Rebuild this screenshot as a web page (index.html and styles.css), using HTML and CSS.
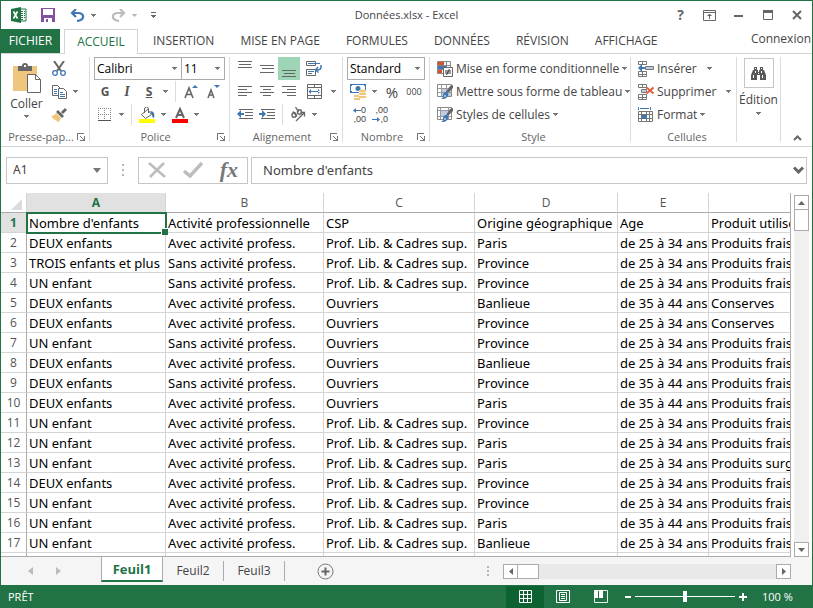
FILE: index.html
```html
<!DOCTYPE html>
<html lang="fr">
<head>
<meta charset="utf-8">
<meta name="viewport" content="width=device-width, initial-scale=1">
<title>Données.xlsx - Excel</title>
<link rel="stylesheet" href="styles.css">
</head>
<body>
<svg class="sprite" aria-hidden="true">
  <symbol id="caret" viewBox="0 0 5 3"><path d="M0 0h5v1H4v1H3v1H2V2H1V1H0z"/></symbol>
  <symbol id="launcher" viewBox="0 0 8 8"><path d="M0 0h7v1H1v6H0zM3 3h1v1h1v1h1v1h1V3h1v5H3V7h3V6H5V5H4V4H3z"/></symbol>
  <symbol id="brush" viewBox="0 0 17 16"><path d="M16 1v3l-5 5-2-1 4-6z" fill="#666"/><path d="M9 8c3 1 3 3 1 5-1 2-4 2-6 2 2-1 2-2 2-4 0-1 1-3 3-3z" fill="#3f77b3"/><path d="M8 11l1 1-1 1-1-1z" fill="#fff"/></symbol>
</svg>
<div class="window">
  <header class="titlebar">
    <div class="quick">
      <svg class="logo" width="16" height="16" viewBox="0 0 16 16"><path d="M9 2h6v12H9z" fill="#fff" stroke="#217346"/><path d="M10 4h2v1h-2zM13 4h1v1h-1zM10 6h2v1h-2zM13 6h1v1h-1zM10 8h2v1h-2zM13 8h1v1h-1zM10 10h2v1h-2zM13 10h1v1h-1zM10 12h2v1h-2z" fill="#217346"/><path d="M0 2l10-2v16L0 14z" fill="#217346"/><path d="M2.500 4.500l4 7M6.500 4.500l-4 7" stroke="#fff" stroke-width="1.600"/></svg>
      <button class="q save" aria-label="Enregistrer"><svg width="14" height="14" viewBox="0 0 14 14"><path d="M0 0h14v14H0z" fill="#8350a0"/><path d="M2 1h10v6H2zM3 10h8v4H7v-3H5v3H3z" fill="#fff"/></svg></button>
      <button class="q undo" aria-label="Annuler"><svg width="15" height="13" viewBox="0 0 15 13"><path d="M2 4h6c7 0 7 7-1 8M6 0L2 4l4 4" fill="none" stroke="#3f77b3" stroke-width="2.200"/></svg><svg class="caret"><use href="#caret"/></svg></button>
      <button class="q redo" aria-label="Rétablir"><svg width="15" height="13" viewBox="0 0 15 13"><path d="M13 4H7c-7 0-7 7 1 8M9 0l4 4-4 4" fill="none" stroke="#bcbcbc" stroke-width="2.200"/></svg><svg class="caret pale"><use href="#caret"/></svg></button>
      <button class="q" aria-label="Personnaliser"><svg width="5" height="6" viewBox="0 0 5 6" fill="#666"><path d="M0 0h5v1H0zM0 3h5v1H4v1H3v1H2V5H1V4H0z"/></svg></button>
    </div>
    <h1>Données.xlsx - Excel</h1>
    <div class="winbtns">
      <button aria-label="Aide"><b>?</b></button>
      <button aria-label="Options du ruban"><svg width="13" height="11" viewBox="0 0 13 11"><path d="M.5.5h12v10H.5zM0 2.500h13" fill="none" stroke="#666"/><path d="M6 9V6H4.500v-1h1V4h2v1h1v1H7v3z" fill="#666"/></svg></button>
      <button aria-label="Réduire"><svg width="9" height="3" viewBox="0 0 9 3"><path d="M0 1h9v2H0z" fill="#666"/></svg></button>
      <button aria-label="Agrandir"><svg width="10" height="10" viewBox="0 0 10 10"><path d="M.5.5h9v9h-9z" fill="none" stroke="#666"/><path d="M0 0h10v3H0z" fill="#666"/></svg></button>
      <button aria-label="Fermer"><svg width="10" height="10" viewBox="0 0 10 10"><path d="M1 1l8 8M9 1L1 9" stroke="#666" stroke-width="2"/></svg></button>
    </div>
  </header>

  <nav class="tabs">
    <a class="file" href="#fichier">FICHIER</a>
    <a class="on" href="#accueil">ACCUEIL</a>
    <a href="#insertion">INSERTION</a>
    <a href="#mise-en-page">MISE EN PAGE</a>
    <a href="#formules">FORMULES</a>
    <a href="#donnees">DONNÉES</a>
    <a href="#revision">RÉVISION</a>
    <a href="#affichage">AFFICHAGE</a>
    <a class="login" href="#connexion">Connexion</a>
  </nav>

  <div class="ribbon">
    <section class="group clip">
      <div class="cols">
        <button class="big"><svg width="28" height="31" viewBox="0 0 28 31"><path d="M0 4h24v25H0z" fill="#efc67d"/><path d="M5 9V4h4a3 3 0 0 1 6 0h4v5z" fill="#666"/><path d="M11 3h2v2h-2z" fill="#fff"/><path d="M14.500 12.500h8l5 5v13h-13z" fill="#fff" stroke="#666"/><path d="M22.500 12.500v5h5" fill="none" stroke="#666"/></svg><span>Coller</span><svg class="caret"><use href="#caret"/></svg></button>
        <div class="rows">
          <div class="row"><button aria-label="Couper"><svg width="14" height="15" viewBox="0 0 14 15"><path d="M2 0l7 10M12 0L5 10" stroke="#666" stroke-width="2"/><circle cx="3" cy="12" r="2.300" fill="none" stroke="#3f77b3" stroke-width="1.300"/><circle cx="11" cy="12" r="2.300" fill="none" stroke="#3f77b3" stroke-width="1.300"/></svg></button></div>
          <div class="row"><button aria-label="Copier"><svg width="15" height="14" viewBox="0 0 15 14"><g fill="#fff" stroke="#666"><path d="M.5.5h5l3 3v7h-8z"/><path d="M6.500 3.500h5l3 3v7h-8z"/></g><path d="M2 4h3v1H2zM2 6h3v1H2zM2 8h3v1H2zM8 7h3v1H8zM8 9h5v1H8zM8 11h5v1H8z" fill="#3f77b3"/></svg></button><button class="dd" aria-label="Options de copie"><svg class="caret"><use href="#caret"/></svg></button></div>
          <div class="row"><button aria-label="Reproduire la mise en forme"><svg width="16" height="14" viewBox="0 0 16 14"><path d="M14 0l2 2-4 4-2-2z" fill="#666"/><path d="M7 2l6 6-2 2-6-6z" fill="#666"/><path d="M5 5l5 5-2 4C5 13 2 11 0 8c2 0 4-1 5-3z" fill="#efc67d"/></svg></button></div>
        </div>
      </div>
      <div class="cap"><span>Presse-pap...</span><button class="launch" aria-label="Presse-papiers"><svg width="8" height="8"><use href="#launcher"/></svg></button></div>
    </section>

    <section class="group police">
      <div class="rows">
        <div class="row fields"><label class="pick font"><select aria-label="Police"><option>Calibri</option></select><svg class="caret"><use href="#caret"/></svg></label><label class="pick size"><select aria-label="Taille"><option>11</option></select><svg class="caret"><use href="#caret"/></svg></label></div>
        <div class="row"><button class="ltr"><b>G</b></button><button class="ltr"><i>I</i></button><button class="ltr"><u>S</u></button><button class="dd" aria-label="Soulignement"><svg class="caret"><use href="#caret"/></svg></button><span class="sep"></span><button aria-label="Agrandir la police"><svg width="14" height="15" viewBox="0 0 14 15"><path d="M1 14L5 4l4 10M2.500 10.500h5" fill="none" stroke="#666" stroke-width="1.600"/><path d="M11 1l3 3H8z" fill="#3f77b3"/></svg></button><button aria-label="Réduire la police"><svg width="14" height="15" viewBox="0 0 14 15"><path d="M2 14l3-8 3 8M3 11h4" fill="none" stroke="#666" stroke-width="1.500"/><path d="M8 1h6l-3 3z" fill="#3f77b3"/></svg></button></div>
        <div class="row"><button aria-label="Bordures"><svg width="14" height="14" viewBox="0 0 14 14"><path d="M.5 0v13M6.500 0v13M12.500 0v13M0 .5h13M0 6.500h13" stroke="#888" stroke-dasharray="1 1" fill="none"/><path d="M0 12h13v1H0z" fill="#555"/></svg></button><button class="dd" aria-label="Choix des bordures"><svg class="caret"><use href="#caret"/></svg></button><span class="sep"></span><button aria-label="Remplissage"><svg width="16" height="16" viewBox="0 0 16 16"><path d="M2.500 7.500l6-5 4 5-6 4z" fill="#fff" stroke="#666"/><path d="M5.500 6V2a2 2 0 0 1 4 0v4" fill="none" stroke="#666"/><path d="M11 4c4 0 5 3 4 7-1 0-2-1-2-3z" fill="#3f77b3"/><path d="M0 12h16v4H0z" fill="#ff0"/></svg></button><button class="dd" aria-label="Couleurs de remplissage"><svg class="caret"><use href="#caret"/></svg></button><button aria-label="Couleur de police"><svg width="16" height="16" viewBox="0 0 16 16"><path d="M4 11L8 2l4 9M5.500 8h5" fill="none" stroke="#666" stroke-width="2"/><path d="M0 12h16v4H0z" fill="red"/></svg></button><button class="dd" aria-label="Couleurs de police"><svg class="caret"><use href="#caret"/></svg></button></div>
      </div>
      <div class="cap"><span>Police</span><button class="launch" aria-label="Options de police"><svg width="8" height="8"><use href="#launcher"/></svg></button></div>
    </section>

    <section class="group align">
      <div class="rows">
        <div class="row"><button aria-label="Haut"><svg width="14" height="16" viewBox="0 0 14 16" fill="#666"><path d="M0 0h14v1H0zM1 3h12v1H1zM0 6h14v1H0z"/></svg></button><button aria-label="Centre vertical"><svg width="14" height="16" viewBox="0 0 14 16" fill="#666"><path d="M0 4h14v1H0zM2 7h12v1H2zM0 11h14v1H0z"/></svg></button><button class="pressed" aria-label="Bas"><svg width="14" height="16" viewBox="0 0 14 16" fill="#666"><path d="M0 9h14v1H0zM2 12h11v1H2zM0 15h14v1H0z"/></svg></button><button class="wide" aria-label="Renvoyer à la ligne"><svg width="16" height="16" viewBox="0 0 16 16"><path d="M.5.5h9v4h-9zM.5 8.500h9v6h-9z" fill="none" stroke="#666"/><path d="M2 2h12v1H2zM2 10h6v1H2zM2 12h4v1H2z" fill="#3f77b3"/><path d="M15 4v2c0 2-2 3-4 3M12 6L9.500 9l3 2.500" fill="none" stroke="#3f77b3" stroke-width="1.500"/></svg></button></div>
        <div class="row"><button aria-label="Gauche"><svg width="14" height="11" viewBox="0 0 14 11" fill="#666"><path d="M0 0h14v1H0zM0 3h9v1H0zM0 6h14v1H0zM0 9h9v1H0z"/></svg></button><button aria-label="Centrer"><svg width="14" height="11" viewBox="0 0 14 11" fill="#666"><path d="M0 0h14v1H0zM3 3h8v1H3zM0 6h14v1H0zM3 9h8v1H3z"/></svg></button><button aria-label="Droite"><svg width="14" height="11" viewBox="0 0 14 11" fill="#666"><path d="M0 0h14v1H0zM5 3h9v1H5zM0 6h14v1H0zM5 9h9v1H5z"/></svg></button><button class="wide" aria-label="Fusionner"><svg width="15" height="15" viewBox="0 0 15 15"><path d="M.5.5h14v14H.5zM.5 3.500h14M.5 11.500h14M7.500.5v3M7.500 11.500v3" fill="none" stroke="#666"/><path d="M2 7h11v1H2zM4 5v5L1.500 7.500zM11 5v5l2.500-2.500z" fill="#3f77b3"/></svg></button><button class="dd" aria-label="Options de fusion"><svg class="caret"><use href="#caret"/></svg></button></div>
        <div class="row"><button aria-label="Diminuer le retrait"><svg width="16" height="11" viewBox="0 0 16 11"><path d="M2 0h14v1H2zM8 3h8v1H8zM8 6h8v1H8zM2 9h14v1H2z" fill="#666"/><path d="M0 5l4-4v3h3v2H4v3z" fill="#3f77b3"/></svg></button><button aria-label="Augmenter le retrait"><svg width="16" height="11" viewBox="0 0 16 11"><path d="M2 0h14v1H2zM8 3h8v1H8zM8 6h8v1H8zM2 9h14v1H2z" fill="#666"/><path d="M7 5L3 1v3H0v2h3v3z" fill="#3f77b3"/></svg></button><span class="sep"></span><button aria-label="Orientation"><svg width="17" height="15" viewBox="0 0 17 15"><g fill="none" stroke="#666" stroke-width="1.400"><ellipse cx="4" cy="8" rx="2" ry="2.200"/><path d="M3 4.500l4 5"/><ellipse cx="9.500" cy="5" rx="2" ry="2.200"/><path d="M5.500 0l3 5"/></g><path d="M6 14l8-8M10.500 5.500h4v4" fill="none" stroke="#666" stroke-width="1.300"/></svg></button><button class="dd" aria-label="Choix d'orientation"><svg class="caret"><use href="#caret"/></svg></button></div>
      </div>
      <div class="cap"><span>Alignement</span><button class="launch" aria-label="Options d'alignement"><svg width="8" height="8"><use href="#launcher"/></svg></button></div>
    </section>

    <section class="group nombre">
      <div class="rows">
        <div class="row fields"><label class="pick format"><select aria-label="Format de nombre"><option>Standard</option></select><svg class="caret"><use href="#caret"/></svg></label></div>
        <div class="row"><button aria-label="Format comptable"><svg width="17" height="16" viewBox="0 0 17 16"><path d="M0 0h16v9H0z" fill="#3f77b3"/><path d="M2 1h12v1h1v5h-1v1H2V7H1V2h1z" fill="#fff"/><circle cx="8" cy="4.500" r="2.500" fill="#3f77b3"/><path d="M9 6h7v9H9zM3 11h6v5H3z" fill="#fff"/><g fill="#efc67d"><ellipse cx="12.500" cy="7" rx="3.500" ry="1.500"/><path d="M9 9h7v2H9zM9 12h7v2H9zM4 11h5v2H4zM4 14h6v2H4z"/></g></svg></button><button class="dd" aria-label="Choix de devise"><svg class="caret"><use href="#caret"/></svg></button><button class="pct">%</button><button class="mil">000</button></div>
        <div class="row"><button class="dec" aria-label="Ajouter une décimale"><span><svg width="8" height="5" viewBox="0 0 8 5"><path d="M0 2.500L3 0v2h5v1H3v2z" fill="#3f77b3"/></svg>0</span><span>,00</span></button><button class="dec" aria-label="Réduire les décimales"><span>,00</span><span><svg width="8" height="5" viewBox="0 0 8 5"><path d="M8 2.500L5 0v2H0v1h5v2z" fill="#3f77b3"/></svg>,0</span></button></div>
      </div>
      <div class="cap"><span>Nombre</span><button class="launch" aria-label="Options de nombre"><svg width="8" height="8"><use href="#launcher"/></svg></button></div>
    </section>

    <section class="group style">
      <div class="rows">
        <div class="row"><button class="cmd"><svg width="16" height="16" viewBox="0 0 16 16"><path d="M.5.5h13v12H.5zM.5 4.500h13M.5 8.500h13M9.500.5v12" fill="#fff" stroke="#888"/><path d="M1 1h6v3H1zM1 9h4v3H1z" fill="#d9502b"/><path d="M1 5h8v3H1z" fill="#3f77b3"/><path d="M6.500 6.500h9v9h-9z" fill="#fff" stroke="#666"/><path d="M8 10h6M8 12h6M12.500 8l-3 6" stroke="#333"/></svg>Mise en forme conditionnelle<svg class="caret"><use href="#caret"/></svg></button></div>
        <div class="row"><button class="cmd"><svg width="16" height="16" viewBox="0 0 16 16"><path d="M.5.5h14v12H.5z" fill="#fff" stroke="#888"/><path d="M5 5h9v7H5z" fill="#bccde4"/><path d="M.5 4.500h14M.5 8.500h14M4.500.5v12M9.500.5v12" stroke="#999"/><use href="#brush" width="17" height="16"/></svg>Mettre sous forme de tableau<svg class="caret"><use href="#caret"/></svg></button></div>
        <div class="row"><button class="cmd"><svg width="16" height="16" viewBox="0 0 16 16"><path d="M.5.5h14v12H.5z" fill="#fff" stroke="#888"/><path d="M3 3h9v7H3z" fill="#bccde4"/><path d="M.5 3.500h14M.5 9.500h14M3.500.5v12M11.500.5v12" stroke="#999"/><use href="#brush" width="17" height="16"/></svg>Styles de cellules<svg class="caret"><use href="#caret"/></svg></button></div>
      </div>
      <div class="cap"><span>Style</span></div>
    </section>

    <section class="group cells">
      <div class="rows">
        <div class="row"><button class="cmd gap"><svg width="16" height="16" viewBox="0 0 16 16"><path d="M.5.5h8v3h-8zM4.500.5v3M.5 10.500h8v5h-8zM4.500 10.500v5M.5 13.500h8" fill="#fff" stroke="#777"/><path d="M7.500 5.500h8v3h-8z" fill="#bccde4" stroke="#777"/><path d="M0 7l4-4v3h3v2H4v3z" fill="#3f77b3"/></svg>Insérer<svg class="caret"><use href="#caret"/></svg></button></div>
        <div class="row"><button class="cmd gap"><svg width="16" height="16" viewBox="0 0 16 16"><path d="M.5.5h8v3h-8zM4.500.5v3M.5 10.500h8v5h-8zM4.500 10.500v5M.5 13.500h8" fill="#fff" stroke="#777"/><path d="M3.500 5.500h5v3h-5z" fill="#bccde4" stroke="#777"/><path d="M8.500 3.500l7 6M15.500 3.500l-7 6" stroke="#e0603c" stroke-width="2"/></svg>Supprimer<svg class="caret"><use href="#caret"/></svg></button></div>
        <div class="row"><button class="cmd"><svg width="16" height="16" viewBox="0 0 16 16"><path d="M0 0h1v3H0zM12 0h1v3h-1zM2 1h9v1H2z" fill="#3f77b3"/><path d="M.5 4.500h14v10H.5zM.5 7.500h14M.5 11.500h14M3.500 4.500v10M8.500 4.500v10M11.500 4.500v10" fill="#fff" stroke="#777"/><path d="M4 8h5v4H4z" fill="#3f77b3"/></svg>Format<svg class="caret"><use href="#caret"/></svg></button></div>
      </div>
      <div class="cap"><span>Cellules</span></div>
    </section>

    <section class="group edit">
      <button class="big"><span class="box"><svg width="15" height="13" viewBox="0 0 15 13" fill="#595959"><path d="M3 0h3v3h1v2h1V3h1V0h3v3h1l2 5v5H9V8H6v5H0V8l2-5h1z"/><path d="M4 1h1v1H4zM10 1h1v1h-1zM2 8h1v3H2zM11 8h1v3h-1zM7 6h1v1H7zM4 4h1v2H4zM10 4h1v2h-1z" fill="#fff"/></svg></span><span>Édition</span><svg class="caret"><use href="#caret"/></svg></button>
    </section>
    <button class="collapse" aria-label="Réduire le ruban"><svg width="9" height="6" viewBox="0 0 9 6"><path d="M1 5l3.500-3.500L8 5" fill="none" stroke="#666" stroke-width="2"/></svg></button>
  </div>

  <div class="formula">
    <label class="name"><input value="A1" aria-label="Zone Nom"><svg class="tri" width="8" height="5" viewBox="0 0 8 5"><path d="M0 0h8L4 5z" fill="#777"/></svg></label>
    <svg class="dots" width="2" height="12" viewBox="0 0 2 12"><path d="M0 0h2v2H0zM0 5h2v2H0zM0 10h2v2H0z" fill="#b5b5b5"/></svg>
    <div class="fbtns"><button aria-label="Annuler la saisie"><svg width="18" height="16" viewBox="0 0 18 16"><path d="M1 1l16 14M16 1L2 15" stroke="#bdbdbd" stroke-width="2.600"/></svg></button><button aria-label="Valider"><svg width="20" height="16" viewBox="0 0 20 16"><path d="M1 9l6 5L19 1" fill="none" stroke="#bdbdbd" stroke-width="3.500"/></svg></button><button class="fx">fx</button></div>
    <label class="bar"><input value="Nombre d'enfants" aria-label="Barre de formule"><svg width="11" height="8" viewBox="0 0 11 8"><path d="M1 1.500l4.500 4.500L10 1.500" fill="none" stroke="#666" stroke-width="3"/></svg></label>
  </div>

  <main class="sheet">
    <div class="grid">
      <table>
        <colgroup><col class="cn"><col class="ca"><col class="cb"><col class="cc"><col class="cd"><col class="ce"><col></colgroup>
        <thead><tr><th class="corner"><svg width="11" height="11" viewBox="0 0 11 11"><path d="M11 0v11H0z" fill="#dcdcdc"/></svg></th><th class="sel">A</th><th>B</th><th>C</th><th>D</th><th>E</th><th></th></tr></thead>
        <tbody>
          <tr><th class="sel">1</th><td class="active">Nombre d'enfants</td><td>Activité professionnelle</td><td>CSP</td><td>Origine géographique</td><td>Age</td><td>Produit utilisé</td></tr>
          <tr><th>2</th><td>DEUX enfants</td><td>Avec activité profess.</td><td>Prof. Lib. &amp; Cadres sup.</td><td>Paris</td><td>de 25 à 34 ans</td><td>Produits frais</td></tr>
          <tr><th>3</th><td>TROIS enfants et plus</td><td>Sans activité profess.</td><td>Prof. Lib. &amp; Cadres sup.</td><td>Province</td><td>de 25 à 34 ans</td><td>Produits frais</td></tr>
          <tr><th>4</th><td>UN enfant</td><td>Sans activité profess.</td><td>Prof. Lib. &amp; Cadres sup.</td><td>Province</td><td>de 25 à 34 ans</td><td>Produits frais</td></tr>
          <tr><th>5</th><td>DEUX enfants</td><td>Avec activité profess.</td><td>Ouvriers</td><td>Banlieue</td><td>de 35 à 44 ans</td><td>Conserves</td></tr>
          <tr><th>6</th><td>DEUX enfants</td><td>Avec activité profess.</td><td>Ouvriers</td><td>Province</td><td>de 25 à 34 ans</td><td>Conserves</td></tr>
          <tr><th>7</th><td>UN enfant</td><td>Sans activité profess.</td><td>Ouvriers</td><td>Province</td><td>de 25 à 34 ans</td><td>Produits frais</td></tr>
          <tr><th>8</th><td>DEUX enfants</td><td>Avec activité profess.</td><td>Ouvriers</td><td>Banlieue</td><td>de 25 à 34 ans</td><td>Produits frais</td></tr>
          <tr><th>9</th><td>DEUX enfants</td><td>Sans activité profess.</td><td>Ouvriers</td><td>Province</td><td>de 35 à 44 ans</td><td>Produits frais</td></tr>
          <tr><th>10</th><td>DEUX enfants</td><td>Avec activité profess.</td><td>Ouvriers</td><td>Paris</td><td>de 35 à 44 ans</td><td>Produits frais</td></tr>
          <tr><th>11</th><td>UN enfant</td><td>Avec activité profess.</td><td>Prof. Lib. &amp; Cadres sup.</td><td>Province</td><td>de 25 à 34 ans</td><td>Produits frais</td></tr>
          <tr><th>12</th><td>UN enfant</td><td>Avec activité profess.</td><td>Prof. Lib. &amp; Cadres sup.</td><td>Paris</td><td>de 25 à 34 ans</td><td>Produits frais</td></tr>
          <tr><th>13</th><td>UN enfant</td><td>Avec activité profess.</td><td>Prof. Lib. &amp; Cadres sup.</td><td>Paris</td><td>de 25 à 34 ans</td><td>Produits surgelés</td></tr>
          <tr><th>14</th><td>DEUX enfants</td><td>Avec activité profess.</td><td>Prof. Lib. &amp; Cadres sup.</td><td>Province</td><td>de 25 à 34 ans</td><td>Produits frais</td></tr>
          <tr><th>15</th><td>UN enfant</td><td>Avec activité profess.</td><td>Prof. Lib. &amp; Cadres sup.</td><td>Province</td><td>de 25 à 34 ans</td><td>Produits frais</td></tr>
          <tr><th>16</th><td>UN enfant</td><td>Avec activité profess.</td><td>Prof. Lib. &amp; Cadres sup.</td><td>Paris</td><td>de 35 à 44 ans</td><td>Produits frais</td></tr>
          <tr><th>17</th><td>UN enfant</td><td>Avec activité profess.</td><td>Prof. Lib. &amp; Cadres sup.</td><td>Banlieue</td><td>de 25 à 34 ans</td><td>Produits frais</td></tr>
          <tr><th></th><td></td><td></td><td></td><td></td><td></td><td></td></tr>
        </tbody>
      </table>
    </div>
    <div class="vscroll"><button aria-label="Monter"><svg width="7" height="4" viewBox="0 0 7 4"><path d="M0 4h7L3.500 0z" fill="#666"/></svg></button><span class="thumb"></span><span class="track"></span><button aria-label="Descendre"><svg width="7" height="4" viewBox="0 0 7 4"><path d="M0 0h7L3.500 4z" fill="#666"/></svg></button></div>
  </main>

  <div class="bottom">
    <div class="arrows"><button aria-label="Feuille précédente"><svg width="5" height="8" viewBox="0 0 5 8"><path d="M5 0v8L0 4z" fill="#bbb"/></svg></button><button aria-label="Feuille suivante"><svg width="5" height="8" viewBox="0 0 5 8"><path d="M0 0v8l5-4z" fill="#bbb"/></svg></button></div>
    <a class="on" href="#feuil1">Feuil1</a><a href="#feuil2">Feuil2</a><a href="#feuil3">Feuil3</a>
    <button class="add" aria-label="Nouvelle feuille"><svg width="17" height="17" viewBox="0 0 17 17"><circle cx="8.500" cy="8.500" r="7.500" fill="none" stroke="#777"/><path d="M8.500 4.500v8M4.500 8.500h8" stroke="#666" stroke-width="2"/></svg></button>
    <svg class="dots" width="2" height="10" viewBox="0 0 2 10"><path d="M0 0h2v2H0zM0 4h2v2H0zM0 8h2v2H0z" fill="#b5b5b5"/></svg>
    <div class="hscroll"><button aria-label="Défiler à gauche"><svg width="4" height="7" viewBox="0 0 4 7"><path d="M4 0v7L0 3.500z" fill="#666"/></svg></button><span class="thumb"></span><span class="track"></span><button aria-label="Défiler à droite"><svg width="4" height="7" viewBox="0 0 4 7"><path d="M0 0v7l4-3.500z" fill="#666"/></svg></button></div>
  </div>

  <footer class="status">
    <span class="ready">PRÊT</span>
    <button class="view on" aria-label="Normal"><svg width="13" height="13" viewBox="0 0 13 13"><path d="M.5.5h12v12H.5zM.5 4.500h12M.5 8.500h12M4.500.5v12M8.500.5v12" fill="none" stroke="#fff"/></svg></button>
    <button class="view" aria-label="Mise en page"><svg width="14" height="13" viewBox="0 0 14 13"><path d="M.5.5h13v12H.5zM3.500 2.500h7v8h-7zM5 4.500h4M5 6.500h4M5 8.500h4" fill="none" stroke="#fff"/></svg></button>
    <button class="view" aria-label="Aperçu des sauts de page"><svg width="14" height="13" viewBox="0 0 14 13"><path d="M.5.5h13v12H.5z" fill="none" stroke="#e4f0e8"/><path d="M0 0h4v8H0zM5 0h4v8H5z" fill="#fff"/></svg></button>
    <div class="zoom"><button aria-label="Zoom arrière"><svg width="6" height="8" viewBox="0 0 6 8"><path d="M0 3h6v2H0z" fill="#fff"/></svg></button><input type="range" min="0" max="100" value="50" aria-label="Zoom"><button aria-label="Zoom avant"><svg width="8" height="8" viewBox="0 0 8 8"><path d="M3 0h2v3h3v2H5v3H3V5H0V3h3z" fill="#fff"/></svg></button></div>
    <span class="pc">100 %</span>
  </footer>
</div>
</body>
</html>
```
FILE: styles.css
```css
* { box-sizing: border-box; }
body { margin: 0; font: 12px/16px "Open Sans", "Noto Sans", sans-serif; color: #444; background: #fff; }
button, select, input { font: inherit; color: inherit; margin: 0; padding: 0; border: 0; background: none; border-radius: 0; }
button { display: flex; align-items: center; justify-content: center; flex: none; white-space: nowrap; }
a { color: inherit; text-decoration: none; }
svg { display: block; flex: none; }
.sprite { position: absolute; width: 0; height: 0; }
.caret { width: 5px; height: 3px; fill: #777; }
.caret.pale { fill: #bbb; }

.window { display: flex; flex-direction: column; height: 100vh; border: 1px solid #217346; border-bottom: 0; overflow: hidden; }

/* Title bar */
.titlebar { display: grid; grid-template-columns: 1fr auto 1fr; align-items: center; height: 28px; flex: none; }
.quick { display: flex; align-items: center; padding-left: 10px; }
.q { gap: 6px; }
.save { margin-left: 14px; }
.undo { margin-left: 15px; }
.redo { margin: 0 14px 0 15px; }
h1 { margin: 0; font-size: 11px; font-weight: 400; }
.winbtns { display: flex; justify-content: flex-end; padding-right: 1px; }
.winbtns button { width: 29px; height: 28px; }
.winbtns b { font-size: 14px; color: #666; }

/* Ribbon tabs */
.tabs { display: flex; flex: none; height: 25px; border-bottom: 1px solid #d4d4d4; }
.tabs a { display: flex; align-items: center; padding: 0 13px; height: 24px; white-space: nowrap; }
.tabs .file { padding: 0; width: 59px; justify-content: center; background: #217346; color: #fff; margin-right: 4px; }
.tabs .on { padding: 0; width: 74px; margin-right: 2px; justify-content: center; height: 25px; border: 1px solid #d4d4d4; border-bottom: 0; background: #fff; color: #217346; }
.tabs .login { margin-left: auto; padding: 0 1px 4px 0; }

/* Ribbon */
.ribbon { display: flex; flex: none; height: 93px; padding-top: 3px; border-bottom: 1px solid #d4d4d4; }
.group { display: flex; flex-direction: column; flex: none; border-right: 1px solid #dcdcdc; margin-bottom: 4px; padding-left: 4px; }
.row { display: flex; align-items: center; height: 23px; }
.row > button { width: 22px; height: 23px; }
.row > .dd { width: 11px; }
.sep { width: 1px; height: 21px; background: #dcdcdc; margin: 0 4px; }
.cap { display: flex; align-items: center; height: 10px; margin-top: auto; color: #666; font-size: 11px; }
.cap > span { flex: 1; text-align: center; white-space: nowrap; }
.launch { width: 8px; margin-right: 4px; }
.launch svg { fill: #777; }
.cols { display: flex; }
.big { flex-direction: column; justify-content: flex-start; gap: 3px; }
.clip { width: 89px; }
.clip .big { width: 43px; padding-top: 5px; }
.pick { display: flex; align-items: center; height: 23px; border: 1px solid #ababab; color: #000; }
.pick select { appearance: none; flex: 1; min-width: 0; height: 21px; padding-left: 2px; }
.pick .caret { margin: 0 4px 0 -9px; pointer-events: none; }
.police { width: 140px; }
.font { width: 88px; }
.size { width: 43px; border-left: 0; }
.ltr { font-size: 12px; color: #555; }
.ltr u { font-weight: 700; }
.ltr i { font-family: "Liberation Serif", serif; font-weight: 700; font-size: 14px; }
.align { width: 113px; }
.pressed { background: #9fd5b7; }
.row > .wide { width: 28px; }
.nombre { width: 87px; }
.format { width: 78px; }
.row > .pct { font-size: 15px; width: 24px; }
.row > .mil { font-size: 9px; width: 20px; }
.row > .dec { flex-direction: column; align-items: flex-end; padding-right: 3px; font: 9px/9px "Liberation Sans", sans-serif; }
.dec span { display: flex; align-items: center; }
.style { width: 201px; padding-left: 7px; }
.row > .cmd { width: auto; gap: 3px; }
.cells { width: 106px; padding-left: 7px; }
.gap .caret { margin-left: 7px; }
.edit { width: 44px; padding: 0; }
.edit .big { gap: 4px; }
.box { display: flex; align-items: center; justify-content: center; width: 30px; height: 30px; border: 1px solid #c6c6c6; margin-top: 1px; }
.collapse { margin: auto 10px 5px auto; }

/* Formula bar */
.formula { display: flex; align-items: center; flex: none; height: 46px; padding: 0 5px; font: 13px/16px "Noto Sans", sans-serif; }
.name, .fbtns, .bar { display: flex; align-items: center; height: 27px; border: 1px solid #c6c6c6; }
.name { width: 102px; padding: 0 6px; }
.name input { flex: 1; min-width: 0; font-size: 12px; }
.formula .dots { margin: 0 14px; }
.fbtns { width: 110px; justify-content: space-between; padding: 0 9px; margin-right: 3px; }
.fx { font: italic 700 22px/22px "Liberation Serif", serif; color: #777; }
.bar { flex: 1; padding: 0 2px 0 11px; }
.bar input { flex: 1; min-width: 0; }

/* Worksheet */
.sheet { display: flex; flex: 1; min-height: 0; }
.grid { flex: 1; min-width: 0; overflow: hidden; border-bottom: 1px solid #ababab; }
table { width: 100%; table-layout: fixed; border-collapse: separate; border-spacing: 0; }
.cn { width: 26px; } .ca { width: 139px; } .cb { width: 158px; } .cc { width: 151px; } .cd { width: 143px; } .ce { width: 91px; }
th, td { height: 20px; padding: 0; white-space: nowrap; overflow: hidden; border: 0 solid #d4d4d4; border-right-width: 1px; border-bottom-width: 1px; line-height: 18px; }
th { font-weight: 400; color: #555; }
thead th { border-bottom-color: #ababab; }
tbody th { border-right-color: #ababab; }
td { padding-left: 2px; font: 13px/18px "Noto Sans", sans-serif; color: #000; }
tr > :last-child { border-right-color: #ababab; }
.corner svg { margin: 4px 0 0 10px; }
.sel { background: #e1e1e1; color: #217346; font-weight: 700; }
.active { position: relative; overflow: visible; outline: 2px solid #217346; outline-offset: -1px; }
.active::after { content: ""; position: absolute; right: -3px; bottom: -3px; width: 6px; height: 6px; background: #217346; border: 1px solid #fff; border-width: 1px 0 0 1px; }
.vscroll { display: flex; flex-direction: column; width: 15px; margin: 2px 3px 0 3px; }
.vscroll button, .hscroll button, .thumb { width: 15px; height: 15px; border: 1px solid #ababab; background: #fff; }
.vscroll .thumb { height: 22px; margin-top: -1px; }
.track { flex: 1; background: #f0f0f0; }

/* Sheet tabs */
.bottom { display: flex; align-items: center; flex: none; height: 28px; background: #f5f5f5; }
.arrows { display: flex; gap: 23px; width: 100px; padding-left: 27px; }
.bottom a { display: flex; align-items: center; justify-content: center; width: 61px; height: 20px; border-right: 1px solid #ababab; }
.bottom .on { width: 62px; height: 25px; align-self: flex-start; background: #fff; border: 1px solid #ababab; border-width: 0 1px 2px; border-bottom-color: #217346; color: #217346; font-weight: 700; font-size: 13px; }
.add { margin: 0 auto 0 32px; }
.hscroll { display: flex; width: 288px; margin: 0 21px 0 14px; }
.hscroll .thumb { width: 21px; border-left: 0; }
.hscroll .track { background: #e9e9e9; }

/* Status bar */
.status { display: flex; align-items: center; flex: none; height: 23px; background: #217346; color: #fff; font-size: 11px; }
.ready { margin: 0 auto 0 7px; }
.view { width: 38px; height: 22px; }
.view.on { background: #0c6230; }
.zoom { display: flex; align-items: center; gap: 4px; margin-left: 5px; }
.zoom input { appearance: none; width: 100px; height: 11px; background: linear-gradient(#fff, #fff) center / 100% 1px no-repeat; }
.zoom input::-webkit-slider-thumb { appearance: none; width: 4px; height: 11px; background: #fff; }
.pc { width: 32px; margin: 0 18px 0 15px; white-space: nowrap; }
```
